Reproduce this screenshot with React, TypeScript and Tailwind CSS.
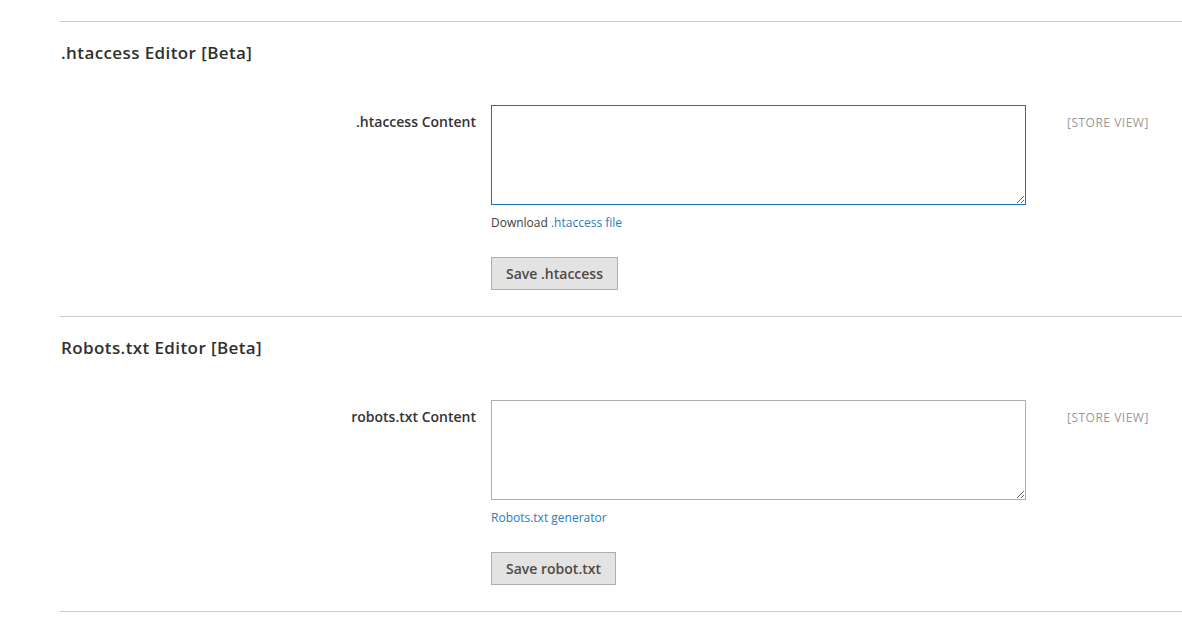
import React from "react";

function Section({
  title,
  label,
  focused,
  note,
  button,
}: {
  title: string;
  label: string;
  focused?: boolean;
  note: React.ReactNode;
  button: string;
}) {
  return (
    <div className="border-t border-[#cccccc] pt-[20px] pb-[26px]">
      <h2 className="text-[17px] leading-[22px] font-semibold text-[#303030] tracking-[0.4px] pl-[1px]">
        {title}
      </h2>
      <div className="mt-[41px] flex items-start">
        <label className="w-[431px] shrink-0 pr-[15px] pt-[7px] text-right text-[14px] leading-[19px] font-semibold text-[#333333]">
          {label}
        </label>
        <div className="w-[535px] shrink-0">
          <textarea
            className={
              focused
                ? "block w-[535px] h-[100px] border border-[#1f73ae] bg-white outline-none resize-y"
                : "block w-[535px] h-[100px] border border-[#adadad] bg-white outline-none resize-y"
            }
          />
          <div className="mt-[10px] text-[12px] leading-[16px] text-[#3d3d3d]">{note}</div>
          <button className="mt-[26px] h-[33px] border border-[#adadad] bg-[#e3e3e3] px-[14px] text-[14px] font-semibold text-[#514943]">
            {button}
          </button>
        </div>
        <div className="ml-[41px] pt-[10px] text-[12px] leading-[16px] tracking-[0.5px] text-[#999999]">
          [STORE VIEW]
        </div>
      </div>
    </div>
  );
}

export default function App() {
  return (
    <div
      className="min-h-[617px] bg-white pt-[21px] pl-[60px]"
      style={{ fontFamily: '"Open Sans", "Noto Sans", sans-serif' }}
    >
      <Section
        title=".htaccess Editor [Beta]"
        label=".htaccess Content"
        focused
        note={
          <>
            Download <a className="text-[#2a7dbd]">.htaccess file</a>
          </>
        }
        button="Save .htaccess"
      />
      <Section
        title="Robots.txt Editor [Beta]"
        label="robots.txt Content"
        note={<a className="text-[#2a7dbd]">Robots.txt generator</a>}
        button="Save robot.txt"
      />
      <div className="border-t border-[#cccccc]" />
    </div>
  );
}
